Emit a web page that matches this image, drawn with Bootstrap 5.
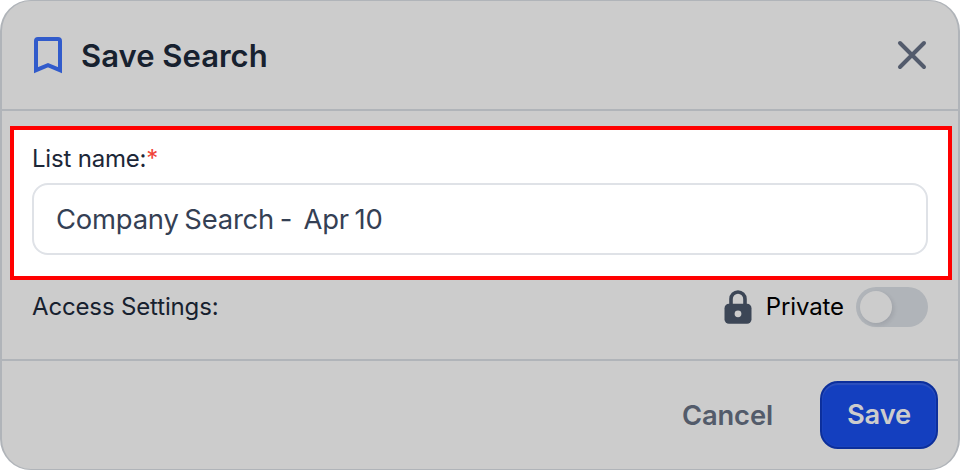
<!DOCTYPE html>
<html lang="en">
<head>
<meta charset="utf-8">
<meta name="viewport" content="width=device-width, initial-scale=1">
<title>Save Search</title>
<link href="https://cdn.jsdelivr.net/npm/bootstrap@5.3.0/dist/css/bootstrap.min.css" rel="stylesheet">
<style>
body{font-family:Inter,"Liberation Sans",sans-serif;background:#fff;overflow:hidden}
.dialog{width:960px;height:470px;background:#ccc;border:solid #b0b4b9;border-width:1px 2px;border-radius:31px}
.dialog-head{height:110px;border-bottom:2px solid #b0b4b9;padding:0 30px 0 31px}
.dialog-title{font-size:31px;line-height:40px;font-weight:600;color:#17212f;letter-spacing:.02px;margin-left:18px;padding-top:2px}
.dialog-close{width:32px;height:32px;line-height:0}
.dialog-main{height:250px;border-bottom:2px solid #b0b4b9;padding:15px 6px 0 8px}
.highlight{height:154px;background:#fff;border:4px solid red;padding:15px 20px 0 18px}
.field-label{font-size:24px;line-height:28px;color:#1c2738;display:block;letter-spacing:-.2px}
.field-label span{color:#f04438}
.name-input,.name-input:focus{height:72px;border:2px solid #dfe2e7;border-radius:16px;padding:0 22px;font-size:27.4px;color:#344054;margin-top:10px;letter-spacing:-.2px;word-spacing:-1.800px;box-shadow:none}
.access{height:54px;padding:0 24px 0 22px;font-size:24px;color:#17212f}
.access-label{letter-spacing:-.15px}
.access-private{color:#000;margin:0 12px 0 14px;letter-spacing:-.1px}
.knob-toggle{width:72px;height:40px;border-radius:20px;background:#b0b4b9;padding:4px}
.knob-toggle i{display:block;width:32px;height:32px;border-radius:50%;background:#ccc;box-shadow:2px 2px 4px rgba(16,24,40,.1)}
.dialog-foot{height:108px;padding:0 20px 0 0}
.cancel-btn,.save-btn{font-size:27.300px;line-height:40px;font-weight:600;letter-spacing:-.1px}
.cancel-btn{color:#535b6a;margin-right:47px;padding-top:1px!important}
.save-btn{width:118px;height:68px;border-radius:18px;background:#143fbf;border:2px solid #0c2f9c;color:#ccc;box-shadow:inset 0 2px 1px #2d50bd,inset 0 0 2px #2d50bd}
</style>
<script src="https://cdn.jsdelivr.net/npm/bootstrap@5.3.0/dist/js/bootstrap.bundle.min.js"></script>
</head>
<body>
<section class="dialog" role="dialog" aria-labelledby="title">
  <header class="dialog-head d-flex align-items-center">
    <svg width="30" height="38" viewBox="0 0 30 38" fill="none" stroke="#315bcb" stroke-width="4"><path d="M3 34.200V5a2 2 0 0 1 2-2h20a2 2 0 0 1 2 2v29.200L15 29.200Z"/></svg>
    <h1 class="dialog-title mb-0" id="title">Save Search</h1>
    <button type="button" class="dialog-close btn p-0 border-0 ms-auto" aria-label="Close"><svg width="32" height="32" viewBox="0 0 32 32" stroke="#535b6c" stroke-width="4" stroke-linecap="round"><path d="M4 4 28 28M28 4 4 28"/></svg></button>
  </header>
  <main class="dialog-main">
    <div class="highlight">
      <label class="field-label" for="listName">List name:<span>*</span></label>
      <input id="listName" class="name-input form-control" type="text" value="Company Search -  Apr 10">
    </div>
    <div class="access d-flex align-items-center">
      <span class="access-label">Access Settings:</span>
      <svg class="ms-auto" width="28" height="36" viewBox="0 0 28 36"><path d="M7 16V10a7 7 0 0 1 14 0V16" fill="none" stroke="#3c4656" stroke-width="3.600"/><rect x=".5" y="14.800" width="27" height="20" rx="4.500" fill="#3c4656"/><circle cx="14" cy="24.800" r="3.400" fill="#ccc"/></svg>
      <span class="access-private">Private</span>
      <div class="knob-toggle" role="switch" aria-checked="false" aria-label="Private"><i></i></div>
    </div>
  </main>
  <footer class="dialog-foot d-flex align-items-center justify-content-end">
    <button type="button" class="cancel-btn btn p-0 border-0">Cancel</button>
    <button type="button" class="save-btn btn p-0">Save</button>
  </footer>
</section>
</body>
</html>
